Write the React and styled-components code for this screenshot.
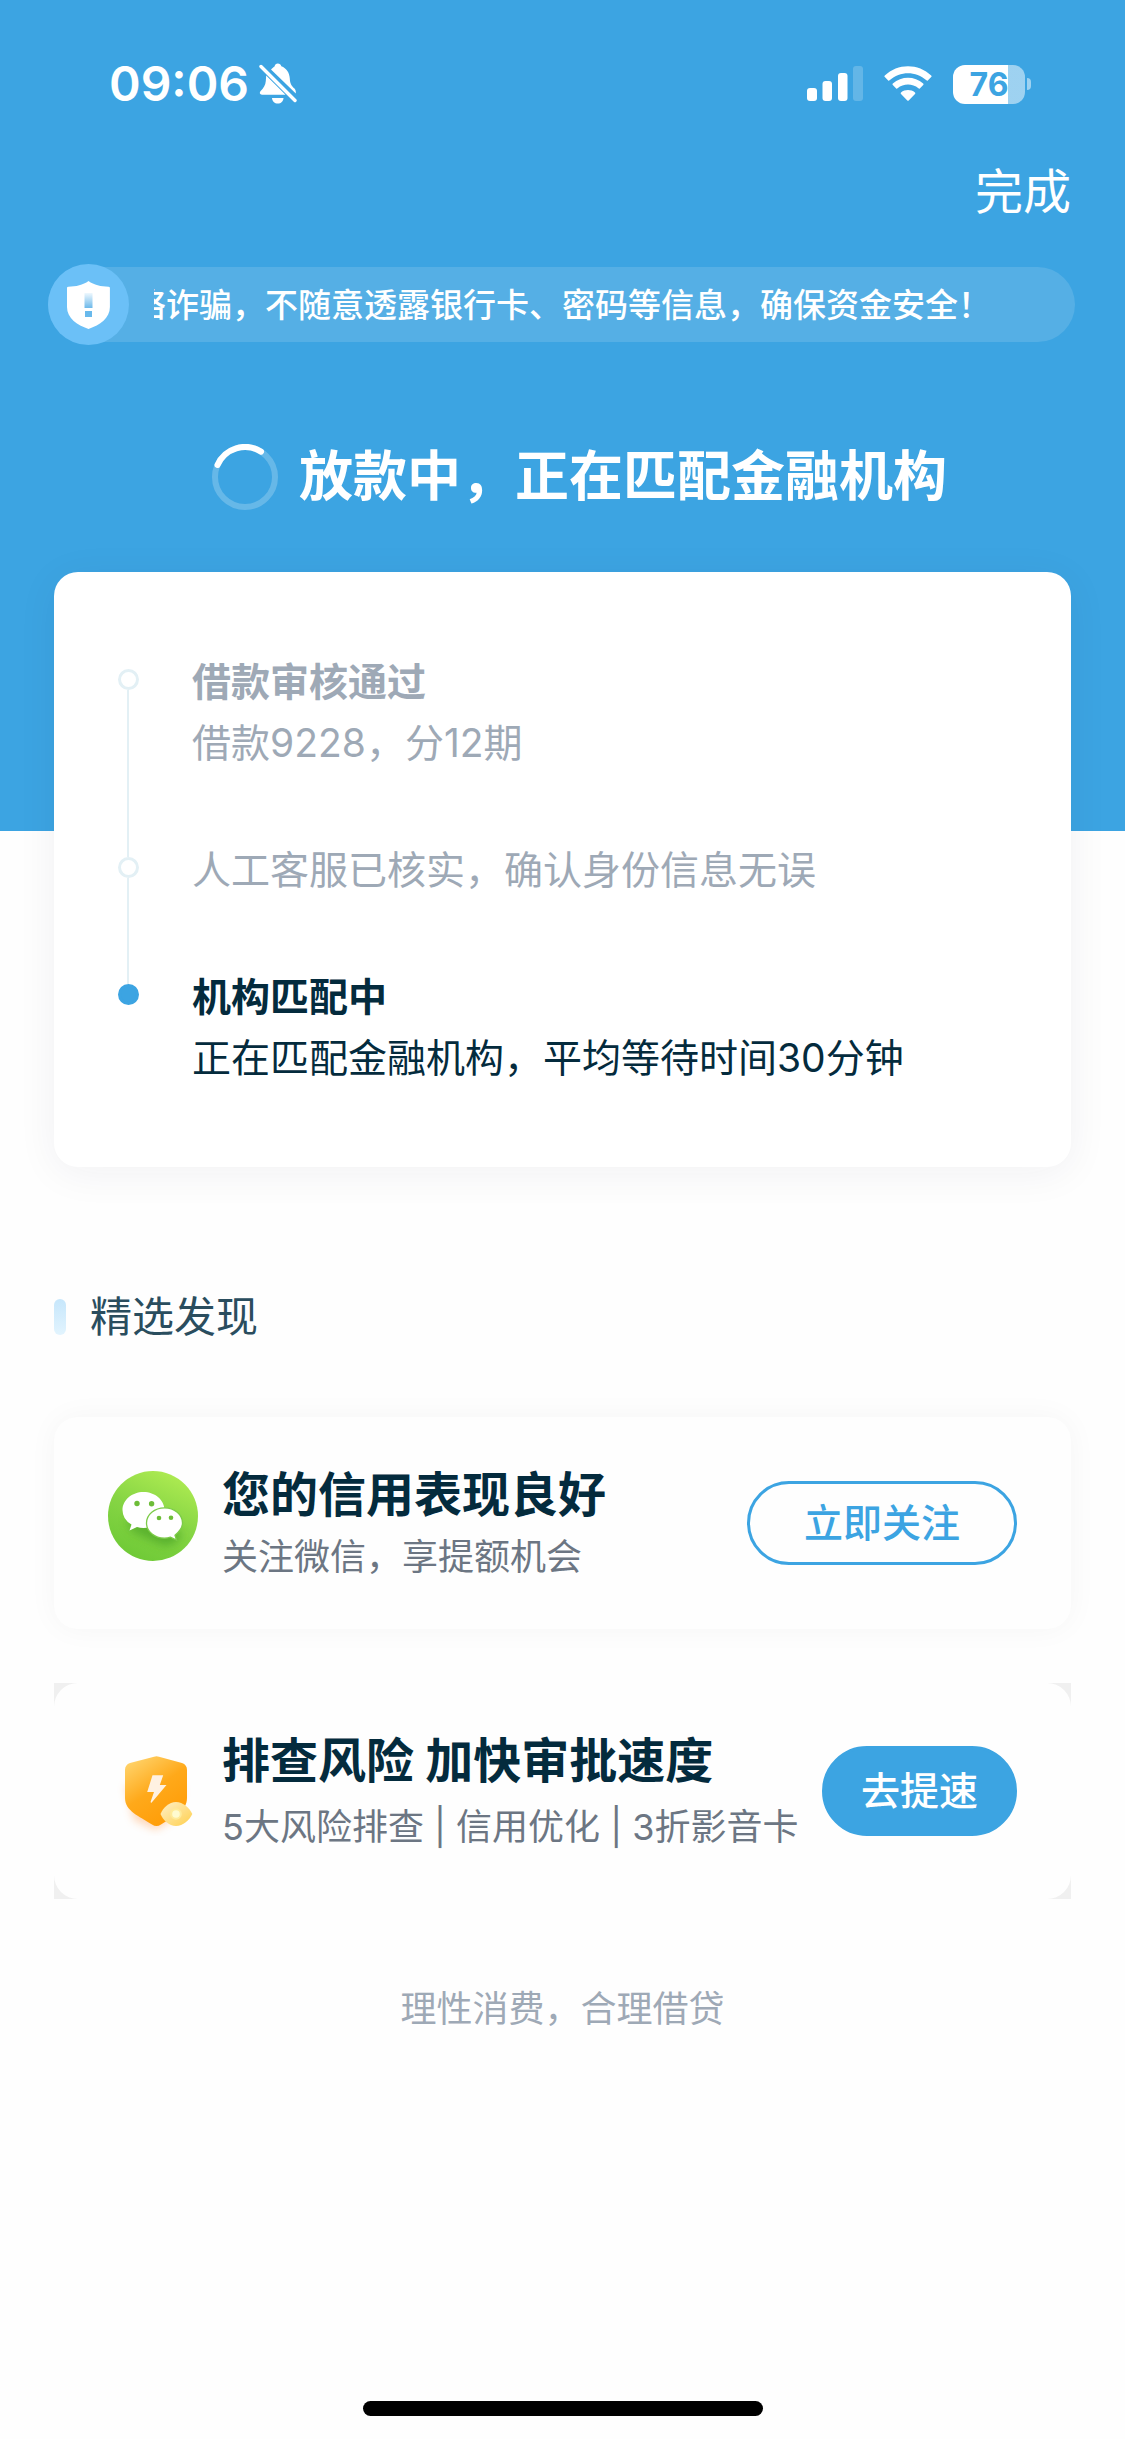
import React from 'react';
import styled, { createGlobalStyle, ThemeProvider } from 'styled-components';

const theme = {
  colors: {
    primary: '#3ca4e2',
    dark: '#042b3d',
    section: '#2a4d5e',
    text: '#6c7683',
    muted: '#9ea9b6',
    line: '#e3f0f5',
  },
};

const GlobalStyle = createGlobalStyle`
  * {
    box-sizing: border-box;
  }
  body {
    margin: 0;
    background: #fefefe;
    font-family: Inter, 'Noto Sans CJK SC', sans-serif;
  }
  h1, h2, h3, p, ul {
    margin: 0;
    padding: 0;
  }
  svg {
    display: block;
    flex-shrink: 0;
  }
`;

const Page = styled.div`
  display: flex;
  flex-direction: column;
  min-height: 100vh;
`;

const Hero = styled.header`
  background: ${props => props.theme.colors.primary};
  color: #fff;
  padding: 54px 0 318px;
`;

const StatusBar = styled.div`
  display: flex;
  align-items: center;
  justify-content: space-between;
  height: 60px;
  padding: 0 94px 0 109px;
`;

const StatusGroup = styled.div`
  display: flex;
  align-items: center;
  gap: ${props => props.gap}px;
`;

const Clock = styled.span`
  font-size: 48px;
  font-weight: 600;
  line-height: 60px;
`;

const Battery = styled.div`
  display: flex;
  align-items: center;
  gap: 2px;
`;

const BatteryBody = styled.div`
  width: 72px;
  height: 39px;
  border-radius: 12px;
  background: linear-gradient(
    90deg,
    #fff ${props => props.level}%,
    rgba(255, 255, 255, 0.5) ${props => props.level}%
  );
  color: ${props => props.theme.colors.primary};
  font-size: 32px;
  font-weight: 700;
  line-height: 39px;
  text-align: center;
`;

const BatteryCap = styled.div`
  width: 4px;
  height: 12px;
  border-radius: 0 4px 4px 0;
  background: rgba(255, 255, 255, 0.5);
`;

const NavBar = styled.nav`
  display: flex;
  align-items: center;
  justify-content: flex-end;
  height: 150px;
  padding: 6px 54px 0;
`;

const DoneButton = styled.button`
  border: 0;
  padding: 0;
  background: none;
  color: #fff;
  font: inherit;
  font-size: 48px;
  line-height: 72px;
`;

const Notice = styled.div`
  display: flex;
  align-items: center;
  height: 75px;
  margin: 3px 50px 3px 48px;
  border-radius: 38px;
  background: rgba(255, 255, 255, 0.13);
`;

const NoticeBadge = styled.div`
  width: 81px;
  height: 81px;
  margin: -3px 25px -3px 0;
  border-radius: 50%;
  background: #6bc0f7;
`;

const NoticeWindow = styled.div`
  display: flex;
  flex: 1;
  overflow: hidden;
  margin-right: 36px;
`;

const NoticeText = styled.p`
  margin-left: -21px;
  font-size: 33px;
  font-weight: 500;
  line-height: 48px;
  white-space: nowrap;
`;

const Headline = styled.div`
  display: flex;
  align-items: center;
  justify-content: center;
  gap: 21px;
  margin-top: 99px;
  padding-left: 34px;
`;

const HeadlineText = styled.h1`
  font-size: 54px;
  font-weight: 700;
  line-height: 72px;
`;

const Content = styled.main`
  display: flex;
  flex-direction: column;
  flex: 1;
  margin-top: -259px;
  padding: 0 54px;
`;

const StepsCard = styled.section`
  padding: 79px 62px;
  border-radius: 24px;
  background: #fff;
  box-shadow: 0 6px 42px rgba(30, 30, 70, 0.06);
`;

const Steps = styled.ul`
  list-style: none;
`;

const Step = styled.li`
  display: flex;
  gap: 52px;
`;

const StepTrack = styled.div`
  display: flex;
  flex-direction: column;
  align-items: center;
  width: 24px;
`;

const StepLine = styled.div`
  width: 2px;
  height: ${props => (props.grow ? 'auto' : '18px')};
  flex: ${props => (props.grow ? 1 : 'none')};
  background: ${props => props.theme.colors.line};
  visibility: ${props => (props.blank ? 'hidden' : 'visible')};
`;

const StepDot = styled.div`
  width: 21px;
  height: 21px;
  flex-shrink: 0;
  border-radius: 50%;
  border: 3px solid
    ${props => (props.active ? props.theme.colors.primary : props.theme.colors.line)};
  background: ${props => (props.active ? props.theme.colors.primary : '#fff')};
`;

const StepBody = styled.div`
  padding-bottom: ${props => (props.last ? 0 : 66)}px;
  color: ${props => (props.active ? props.theme.colors.dark : props.theme.colors.muted)};
  font-size: 39px;
  line-height: 61px;
`;

const StepTitle = styled.h3`
  font-size: 39px;
  font-weight: 700;
`;

const SectionTitle = styled.h2`
  display: flex;
  align-items: center;
  gap: 24px;
  margin: 120px 0 70px;
  color: ${props => props.theme.colors.section};
  font-size: 42px;
  font-weight: 400;
  line-height: 60px;

  &::before {
    content: '';
    width: 12px;
    height: 36px;
    border-radius: 6px;
    background: linear-gradient(#c6e6fb, #e2f4fe);
  }
`;

const PromoCard = styled.article`
  display: flex;
  align-items: center;
  gap: 24px;
  padding: ${props => (props.plain ? '45px 54px 39px' : '46px 54px 40px')};
  border-radius: 24px;
  background: #fefefe;
  box-shadow: ${props => (props.plain ? 'none' : '0 0 30px rgba(0, 0, 0, 0.04)')};
`;

const PromoFrame = styled.div`
  margin-top: 54px;
  background: #f0f0f0;
`;

const PromoIcon = styled.div`
  margin-bottom: ${props => props.lift}px;
`;

const PromoBody = styled.div`
  flex: 1;
  min-width: 0;
  white-space: nowrap;
`;

const PromoTitle = styled.h3`
  color: ${props => props.theme.colors.dark};
  font-size: 48px;
  font-weight: 700;
  line-height: ${props => props.line}px;
`;

const PromoText = styled.p`
  color: ${props => props.theme.colors.text};
  font-size: 36px;
  line-height: ${props => props.line}px;
`;

const PillButton = styled.button`
  width: ${props => (props.filled ? 195 : 270)}px;
  height: ${props => (props.filled ? 90 : 84)}px;
  flex-shrink: 0;
  margin-bottom: 6px;
  padding: 0;
  border: 3px solid ${props => props.theme.colors.primary};
  border-radius: 45px;
  background: ${props => (props.filled ? props.theme.colors.primary : 'transparent')};
  color: ${props => (props.filled ? '#fff' : props.theme.colors.primary)};
  font: inherit;
  font-size: 39px;
  font-weight: 500;
  line-height: 60px;
`;

const Slogan = styled.p`
  margin-top: 80px;
  color: ${props => props.theme.colors.muted};
  font-size: 36px;
  line-height: 60px;
  text-align: center;
`;

const HomeIndicator = styled.div`
  width: 400px;
  height: 15px;
  margin: auto auto 23px;
  border-radius: 8px;
  background: #000;
`;

const BellOffIcon = () => (
  <svg width="38" height="42" viewBox="0 0 38 42" fill="#fff">
    <path d="M12 6.5C13.500 5 14.500 4.200 15.500 3.500C16 1.500 17 .5 18.800 .5S21.800 1.500 22.300 3.200C27.500 5.200 30.500 9.500 30.800 15.500C31 20 32 22.500 35.500 25.500C36.500 26.700 37 28 36.800 30.500Z" />
    <path d="M7.200 12.500L26.500 31.700H3C.8 31.700 .2 29.800 1.400 28.300C4.500 25 6.500 22.500 6.800 18Z" />
    <path d="M13 35H24.500C24.300 38.500 22 40.500 18.800 40.500S13.200 38.500 13 35Z" />
    <path d="M2 3.500L36 37.500" stroke="#fff" strokeWidth="3.400" strokeLinecap="round" />
  </svg>
);

const SignalIcon = () => (
  <svg width="56" height="36" viewBox="0 0 56 36" fill="#fff">
    <rect x="0" y="22" width="10" height="13" rx="3" />
    <rect x="15.500" y="15" width="9.500" height="20" rx="3" />
    <rect x="31" y="7" width="9.500" height="28" rx="3" />
    <rect x="46" y="0" width="10" height="35" rx="3" opacity=".2" />
  </svg>
);

const WifiIcon = () => (
  <svg width="48" height="36" viewBox="0 0 48 36" fill="#fff">
    <path d="M.8 9.500C13.500-3 34.500-3 47.200 9.500Q48 10.300 47.200 11.100L43.800 14.400Q43.200 15 42.400 14.300C32 4.800 16 4.800 5.600 14.300Q4.800 15 4.200 14.400L.8 11.100Q0 10.300 .8 9.500Z" />
    <path d="M8.800 17.500C17.500 9.700 30.500 9.700 39.200 17.500Q40 18.300 39.200 19.100L35.800 22.400Q35.200 23 34.400 22.300C28.500 17.300 19.500 17.300 13.600 22.300Q12.800 23 12.200 22.400L8.800 19.100Q8 18.300 8.800 17.500Z" />
    <path d="M17 26.500C21 23.300 27 23.300 31 26.500Q31.800 27.300 31 28.100L24.700 34.500Q24 35.200 23.300 34.500L17 28.100Q16.200 27.300 17 26.500Z" />
  </svg>
);

const NoticeIcon = () => (
  <svg width="81" height="81" viewBox="0 0 81 81">
    <defs>
      <linearGradient id="markFade" x1="0" y1="0" x2="0" y2="1">
        <stop offset="0" stopColor="#eef8fe" />
        <stop offset="1" stopColor="#6db9ea" />
      </linearGradient>
    </defs>
    <path
      d="M40.500 17C46 21 53 22.700 60.500 22.700Q61.900 22.700 61.900 24V43C61.900 54 52 61 40.500 65C29 61 19 54 19 43V24Q19 22.700 20.400 22.700C28 22.700 35 21 40.500 17Z"
      fill="#fff"
    />
    <rect x="36.500" y="29" width="8" height="15" fill="url(#markFade)" />
    <rect x="37" y="47" width="7" height="6" fill="#68b9ec" />
  </svg>
);

const Spinner = () => (
  <svg width="66" height="66" viewBox="0 0 66 66" fill="none" stroke="#fff" strokeWidth="6">
    <circle cx="33" cy="33" r="30" opacity=".22" />
    <path d="M5.500 21A30 30 0 0 1 49 7.600" strokeLinecap="round" />
  </svg>
);

const WechatIcon = () => (
  <svg width="90" height="90" viewBox="0 0 90 90">
    <defs>
      <linearGradient id="wechatBg" x1=".75" y1="0" x2=".3" y2="1">
        <stop offset="0" stopColor="#b0ec52" />
        <stop offset=".5" stopColor="#86d544" />
        <stop offset="1" stopColor="#6ec936" />
      </linearGradient>
      <filter id="wechatShade" x="-50%" y="-50%" width="200%" height="200%">
        <feGaussianBlur stdDeviation="5" />
      </filter>
    </defs>
    <circle cx="45" cy="45" r="45" fill="url(#wechatBg)" />
    <path
      d="M18 48L72 60C76 72 58 78 48 71L24 60Z"
      fill="#3f9a24"
      opacity=".6"
      filter="url(#wechatShade)"
    />
    <path
      d="M35.500 21C47 21 56.500 29 56.500 39S47 57 35.500 57Q32 57 29 56L21.500 59.500L23.500 53.500Q14.500 48.500 14.500 39C14.500 29 24 21 35.500 21Z"
      fill="#fff"
    />
    <path
      d="M56.500 36.800C66.500 36.800 74.500 43.500 74.500 52Q74.500 58 67 64.300L68.500 69L62.500 66.200Q59.500 67.200 56.500 67.200C46.500 67.200 38.500 60.500 38.500 52S46.500 36.800 56.500 36.800Z"
      fill="#fff"
      stroke="#7ccb48"
      strokeWidth="1.300"
    />
    <g fill="#6dbd38">
      <circle cx="29" cy="32.500" r="2.700" />
      <circle cx="43.600" cy="32.700" r="2.700" />
      <circle cx="51" cy="47" r="2.300" />
      <circle cx="63" cy="46.700" r="2.300" />
    </g>
  </svg>
);

const RiskIcon = () => (
  <svg width="90" height="90" viewBox="0 0 90 90">
    <defs>
      <linearGradient id="riskShield" x1="0" y1="0" x2=".6" y2="1">
        <stop offset="0" stopColor="#ffda78" />
        <stop offset=".55" stopColor="#ffa91a" />
        <stop offset="1" stopColor="#ff9d08" />
      </linearGradient>
      <linearGradient id="riskEye" x1="0" y1="0" x2="1" y2="1">
        <stop offset="0" stopColor="#fff0c8" />
        <stop offset="1" stopColor="#ffcf4c" />
      </linearGradient>
      <filter id="riskGlow" x="-50%" y="-50%" width="200%" height="200%">
        <feGaussianBlur stdDeviation="4" />
      </filter>
    </defs>
    <path d="M17 40H75L70 70L48 84L26 74Z" fill="#ff9c50" opacity=".4" filter="url(#riskGlow)" />
    <path
      d="M46 10.800Q48.500 9.800 51 10.800L74 17Q79 18.800 79 24V52C79 65 66 70 53 78.500Q48.500 81.500 44 78.500C31 70 17 65 17 52V24Q17 18.800 22 17Z"
      fill="url(#riskShield)"
    />
    <path
      d="M44.500 29.300H55.200L51.800 39H58.500L43.500 56.700Q42.500 57 42.700 55.500L46 46H39.200Z"
      fill="#fff1e2"
    />
    <path
      d="M52.500 68C55 62 61 56 68 56S81.500 62 84.300 68C81.500 74 75 80 68 80S55 74 52.500 68Z"
      fill="url(#riskEye)"
    />
    <circle cx="68" cy="68" r="4.800" fill="#fffbd0" stroke="#ffeb9a" strokeWidth="2" />
  </svg>
);

const notice = '络诈骗\uff0c不随意透露银行卡、密码等信息\uff0c确保资金安全\uff01';

const steps = [
  { title: '借款审核通过', text: '借款9228\uff0c分12期' },
  { text: '人工客服已核实\uff0c确认身份信息无误' },
  {
    title: '机构匹配中',
    text: '正在匹配金融机构\uff0c平均等待时间30分钟',
    active: true,
  },
];

const StepItem = ({ step, first, last }) => {
  return (
    <Step>
      <StepTrack>
        <StepLine blank={first} />
        <StepDot active={step.active} />
        {!last && <StepLine grow />}
      </StepTrack>
      <StepBody active={step.active} last={last}>
        {step.title && <StepTitle>{step.title}</StepTitle>}
        <p>{step.text}</p>
      </StepBody>
    </Step>
  );
};

const App = () => {
  return (
    <ThemeProvider theme={theme}>
      <GlobalStyle />
      <Page>
        <Hero>
          <StatusBar>
            <StatusGroup gap={10}>
              <Clock>09:06</Clock>
              <BellOffIcon />
            </StatusGroup>
            <StatusGroup gap={21}>
              <SignalIcon />
              <WifiIcon />
              <Battery>
                <BatteryBody level={76}>76</BatteryBody>
                <BatteryCap />
              </Battery>
            </StatusGroup>
          </StatusBar>
          <NavBar>
            <DoneButton type="button">完成</DoneButton>
          </NavBar>
          <Notice>
            <NoticeBadge>
              <NoticeIcon />
            </NoticeBadge>
            <NoticeWindow>
              <NoticeText>{notice}</NoticeText>
            </NoticeWindow>
          </Notice>
          <Headline>
            <Spinner />
            <HeadlineText>{'放款中\uff0c正在匹配金融机构'}</HeadlineText>
          </Headline>
        </Hero>
        <Content>
          <StepsCard>
            <Steps>
              {steps.map((step, i) => (
                <StepItem
                  key={step.text}
                  step={step}
                  first={i === 0}
                  last={i === steps.length - 1}
                />
              ))}
            </Steps>
          </StepsCard>
          <SectionTitle>精选发现</SectionTitle>
          <PromoCard>
            <PromoIcon lift={20}>
              <WechatIcon />
            </PromoIcon>
            <PromoBody>
              <PromoTitle line={63}>您的信用表现良好</PromoTitle>
              <PromoText line={63}>{'关注微信\uff0c享提额机会'}</PromoText>
            </PromoBody>
            <PillButton type="button">立即关注</PillButton>
          </PromoCard>
          <PromoFrame>
            <PromoCard plain>
              <PromoIcon lift={6}>
                <RiskIcon />
              </PromoIcon>
              <PromoBody>
                <PromoTitle line={66}>排查风险 加快审批速度</PromoTitle>
                <PromoText line={66}>5大风险排查 | 信用优化 | 3折影音卡</PromoText>
              </PromoBody>
              <PillButton type="button" filled>
                去提速
              </PillButton>
            </PromoCard>
          </PromoFrame>
          <Slogan>{'理性消费\uff0c合理借贷'}</Slogan>
        </Content>
        <HomeIndicator />
      </Page>
    </ThemeProvider>
  );
};

export default App;
